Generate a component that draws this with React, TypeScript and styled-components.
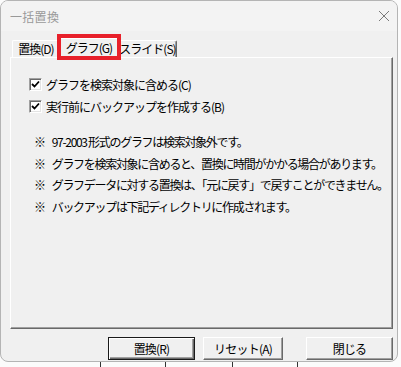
import React from 'react';
import styled, { createGlobalStyle } from 'styled-components';

const Global = createGlobalStyle`
  html, body { margin: 0; padding: 0; background: #fbfbfb; }
  body {
    width: 401px; height: 367px; overflow: hidden;
    font-family: "Noto Sans CJK JP", "Noto Sans", sans-serif;
    color: #000;
  }
`;

const Page = styled.div`
  position: relative;
  width: 401px;
  height: 367px;
  display: flex;
  flex-direction: column;
`;

const Window = styled.div`
  width: 398px;
  height: 362px;
  box-sizing: border-box;
  border: 1px solid #b4b4b4;
  border-radius: 8px;
  background: #f0f0f0;
  display: flex;
  flex-direction: column;
  overflow: hidden;
`;

const TitleBar = styled.div`
  height: 30px;
  background: #f3f3f3;
  display: flex;
  align-items: center;
  justify-content: space-between;
  padding: 0 7px 0 9px;
`;

const Title = styled.span`
  font-size: 12px;
  color: #999;
  letter-spacing: 0.3px;
`;

const Body = styled.div`
  padding: 7px 0 0 9px;
  display: flex;
  flex-direction: column;
`;

const TabRow = styled.div`
  height: 19px;
  display: flex;
  align-items: flex-end;
  padding-left: 2px;
  position: relative;
  z-index: 1;
`;

const Tab = styled.div<{ $w: number; $active?: boolean }>`
  box-sizing: border-box;
  width: ${(p) => p.$w}px;
  height: ${(p) => (p.$active ? 20 : 17)}px;
  margin: ${(p) => (p.$active ? '0 -2px -1px -2px' : '0')};
  background: #f0f0f0;
  border-top: 1px solid #fff;
  border-left: 1px solid #fff;
  border-right: 1px solid #696969;
  box-shadow: inset -1px 0 #a0a0a0;
  border-radius: 2px 2px 0 0;
  display: flex;
  align-items: center;
  justify-content: center;
  white-space: nowrap;
  font-size: 12px;
  letter-spacing: -1px;
  line-height: 1;
  padding-bottom: ${(p) => (p.$active ? 2 : 0)}px;
  position: relative;
  z-index: ${(p) => (p.$active ? 2 : 1)};
`;

const Panel = styled.div`
  box-sizing: border-box;
  width: 383px;
  height: 272px;
  border-top: 1px solid #fff;
  border-left: 1px solid #fff;
  border-right: 1px solid #696969;
  border-bottom: 1px solid #696969;
  box-shadow: inset -1px -1px #a0a0a0;
  padding: 15px 0 0 18px;
  display: flex;
  flex-direction: column;
`;

const CheckRow = styled.label`
  height: 22px;
  display: flex;
  align-items: center;
  gap: 4px;
  font-size: 12px;
  letter-spacing: -1px;
`;

const Box = styled.span`
  box-sizing: border-box;
  width: 13px;
  height: 13px;
  background: #fff;
  border-top: 1px solid #a0a0a0;
  border-left: 1px solid #a0a0a0;
  border-right: 1px solid #fff;
  border-bottom: 1px solid #fff;
  box-shadow: inset 1px 1px #696969, inset -1px -1px #e3e3e3;
  display: flex;
  align-items: center;
  justify-content: center;
`;

const Notes = styled.div`
  margin-top: 14px;
  padding-left: 5px;
  display: flex;
  flex-direction: column;
`;

const Note = styled.div`
  height: 21.5px;
  line-height: 21.5px;
  font-size: 12px;
  letter-spacing: -1.3px;
  white-space: nowrap;
`;

const Mark = styled.span`
  margin-right: 7px;
`;

const ButtonRow = styled.div`
  margin-top: 8px;
  padding-left: 98px;
  display: flex;
`;

const Button = styled.div<{ $w: number; $gap: number; $default?: boolean }>`
  box-sizing: border-box;
  width: ${(p) => p.$w}px;
  height: 23px;
  margin-left: ${(p) => p.$gap}px;
  background: #f0f0f0;
  display: flex;
  align-items: center;
  justify-content: center;
  font-size: 12px;
  letter-spacing: -0.8px;
  ${(p) =>
    p.$default
      ? `border: 1px solid #1a1a1a; box-shadow: inset 1px 1px #fff, inset -1px -1px #696969, inset -2px -2px #a0a0a0;`
      : `border-top: 1px solid #fff; border-left: 1px solid #fff; border-right: 1px solid #696969; border-bottom: 1px solid #696969; box-shadow: inset -1px -1px #a0a0a0;`}
`;

const Ticks = styled.div`
  height: 5px;
  display: flex;
  padding-left: 100px;
`;

const Tick = styled.span<{ $gap: number }>`
  width: 1px;
  height: 5px;
  margin-left: ${(p) => p.$gap}px;
  background: #333;
`;

const Highlight = styled.div`
  position: absolute;
  left: 57px;
  top: 34px;
  width: 64px;
  height: 26px;
  box-sizing: border-box;
  border: 4px solid #e8202a;
  z-index: 5;
`;

const Check = () => (
  <svg width="9" height="9" viewBox="0 0 9 9">
    <path d="M1 4 L3.5 6.5 L8 1.5" fill="none" stroke="#000" strokeWidth="1.8" />
  </svg>
);

const CloseIcon = () => (
  <svg width="12" height="12" viewBox="0 0 12 12">
    <path d="M1 1 L11 11 M11 1 L1 11" stroke="#7a7a7a" strokeWidth="1" fill="none" />
  </svg>
);

export default function App() {
  const notes = [
    '97-2003 形式のグラフは検索対象外です。',
    'グラフを検索対象に含めると、置換に時間がかかる場合があります。',
    'グラフデータに対する置換は、「元に戻す」で戻すことができません。',
    'バックアップは下記ディレクトリに作成されます。',
  ];
  return (
    <Page>
      <Global />
      <Window>
        <TitleBar>
          <Title>一括置換</Title>
          <CloseIcon />
        </TitleBar>
        <Body>
          <TabRow>
            <Tab $w={48}>置換(D)</Tab>
            <Tab $w={62} $active>
              グラフ(G)
            </Tab>
            <Tab $w={59}>スライド(S)</Tab>
          </TabRow>
          <Panel>
            <CheckRow>
              <Box>
                <Check />
              </Box>
              グラフを検索対象に含める(C)
            </CheckRow>
            <CheckRow>
              <Box>
                <Check />
              </Box>
              実行前にバックアップを作成する(B)
            </CheckRow>
            <Notes>
              {notes.map((n) => (
                <Note key={n}>
                  <Mark>※</Mark>
                  {n}
                </Note>
              ))}
            </Notes>
          </Panel>
          <ButtonRow>
            <Button $w={87} $gap={0} $default>
              置換(R)
            </Button>
            <Button $w={80} $gap={8}>
              リセット(A)
            </Button>
            <Button $w={87} $gap={23}>
              閉じる
            </Button>
          </ButtonRow>
        </Body>
      </Window>
      <Ticks>
        <Tick $gap={0} />
        <Tick $gap={64} />
        <Tick $gap={66} />
        <Tick $gap={64} />
      </Ticks>
      <Highlight />
    </Page>
  );
}
